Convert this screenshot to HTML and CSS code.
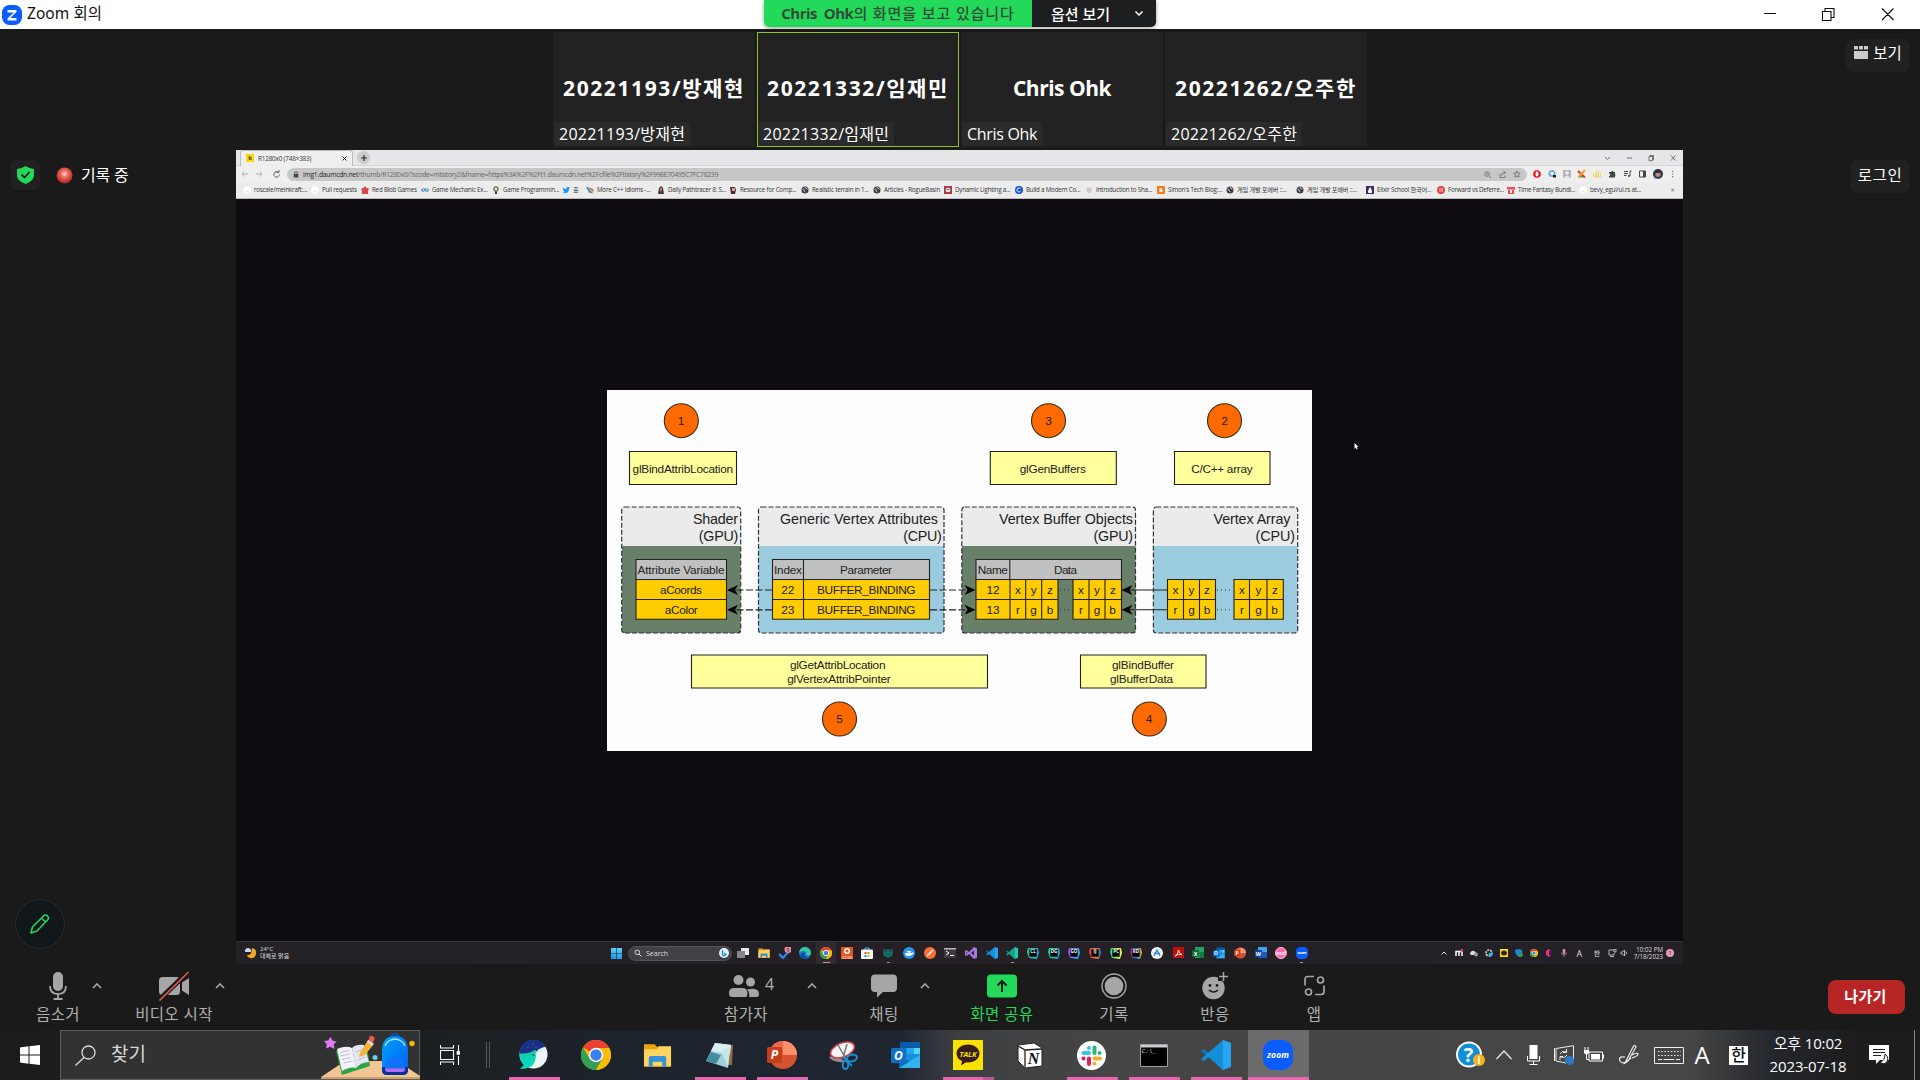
FILE: index.html
```html
<!DOCTYPE html>
<html lang="ko">
<head>
<meta charset="utf-8">
<title>Zoom 회의</title>
<link rel="stylesheet" href="styles.css">
</head>
<body>
<svg class="defs" aria-hidden="true">
  <defs>
    <linearGradient id="sky" x1="0" y1="0" x2="0" y2="1"><stop offset="0" stop-color="#5fd0f7"/><stop offset="1" stop-color="#1b9be6"/></linearGradient>
    <linearGradient id="whaleBody" x1="0" y1="0" x2="0" y2="1"><stop offset="0" stop-color="#17c9a6"/><stop offset="1" stop-color="#00e0c0"/></linearGradient>
    <linearGradient id="bag" x1="0" y1="0" x2="1" y2="1"><stop offset="0" stop-color="#00a2ff"/><stop offset="1" stop-color="#0060f0"/></linearGradient>
    <linearGradient id="jb1"><stop offset="0" stop-color="#21d789"/><stop offset="1" stop-color="#1a9edb"/></linearGradient>
    <linearGradient id="jb2"><stop offset="0" stop-color="#b345f1"/><stop offset="1" stop-color="#07c3f2"/></linearGradient>
    <linearGradient id="jb3"><stop offset="0" stop-color="#fe315d"/><stop offset=".6" stop-color="#f97a12"/><stop offset="1" stop-color="#087cfa"/></linearGradient>
    <linearGradient id="jb4"><stop offset="0" stop-color="#21d789"/><stop offset="1" stop-color="#fcf84a"/></linearGradient>
    <linearGradient id="jb5"><stop offset="0" stop-color="#c90f5e"/><stop offset=".5" stop-color="#077cfb"/><stop offset="1" stop-color="#fdb60d"/></linearGradient>
    <radialGradient id="rec" cx=".5" cy=".4" r=".6"><stop offset="0" stop-color="#ffd9d2"/><stop offset=".35" stop-color="#ea7064"/><stop offset=".8" stop-color="#c8382f"/><stop offset="1" stop-color="#7c2a25"/></radialGradient>
  </defs>
  <symbol id="chrome" viewBox="0 0 30 30"><circle cx="15" cy="15" r="15" fill="#fbbc05"/><path d="M15 15 2 7.500A15 15 0 0 1 28 7.500z" fill="#ea4335"/><path d="M15 15 8.500 18.500 2 7.500A15 15 0 0 0 15 30L21.500 18.500z" fill="#34a053"/><path d="M15 8h13.200A15 15 0 0 1 15 30l6.500-11z" fill="#fbbc05"/><circle cx="15" cy="15" r="7.200" fill="#fff"/><circle cx="15" cy="15" r="5.700" fill="#3a7ff0"/></symbol>
  <symbol id="explorer" viewBox="0 0 30 30"><path d="M1 4h11l3 3h14v20H1z" fill="#e8a317"/><path d="M1 9h13l2-3h13v21H1z" fill="#ffd45c"/><path d="M6 27V18q0-2 2-2h14q2 0 2 2v9h-4v-4q0-1-1-1h-8q-1 0-1 1v4z" fill="#3292dc"/></symbol>
  <symbol id="ppt" viewBox="0 0 30 30"><circle cx="16" cy="15" r="14" fill="#d35230"/><path d="M16 1a14 14 0 0 1 14 14H16z" fill="#ff8f6b"/><path d="M16 1v14H2A14 14 0 0 1 16 1z" fill="#ed6c47"/><rect x="0" y="7" width="15" height="16" rx="1.500" fill="#c43e1c"/></symbol>
  <symbol id="outlook" viewBox="0 0 30 30"><path d="M9 2h20v25H9z" fill="#1490df"/><path d="M9 2h20v6H9z" fill="#0a5ca8"/><path d="M16 8h7v6h-7z" fill="#28a8ea"/><path d="M23 8h6v6h-6z" fill="#50d9ff"/><path d="M8 15l21 13H8z" fill="#0f6cbd"/><path d="M29 15v13H8z" fill="#35b1f0"/><rect y="8" width="15" height="15" rx="1.500" fill="#0f6fc5"/></symbol>
  <symbol id="vscode" viewBox="0 0 30 30"><path d="M22 0 8 13 3 9 0 11l20 17 2 2z" fill="#0a7bc4"/><path d="M22 30 8 17 3 21 0 19 20 2l2-2z" fill="#168fdb"/><path d="M22 0l8 3v24l-8 3z" fill="#2aa5f3"/></symbol>
  <symbol id="vsci" viewBox="0 0 30 30"><path d="M22 0 8 13 3 9 0 11l20 17 2 2z" fill="#128b76"/><path d="M22 30 8 17 3 21 0 19 20 2l2-2z" fill="#17a589"/><path d="M22 0l8 3v24l-8 3z" fill="#24c9a5"/></symbol>
  <symbol id="globe" viewBox="0 0 8 8"><circle cx="4" cy="4" r="3.500" fill="#3c3c40"/><path d="M1.500 3Q3 3 3 4.200T4.500 6M4 1q0 1.500 2.500 2" stroke="#ddd" fill="none"/></symbol>
  <symbol id="github" viewBox="0 0 8 8"><circle cx="4" cy="4" r="3.800" fill="#fff"/><path d="M2.500 6.500Q4 3 5.500 6.500" stroke="#dedede" fill="none"/></symbol>
  <symbol id="chev" viewBox="0 0 10 6"><path d="M1 5l4-4 4 4" fill="none" stroke="#a6a6a6" stroke-width="1.700"/></symbol>
</svg>

<header class="titlebar">
  <svg class="app-mark" viewBox="0 0 20 20"><rect width="20" height="20" rx="7.500" fill="#0b5cff"/><path d="M5.500 5h9v1.800L8.300 13H14.500v2.400h-9v-1.800L11.700 7.400H5.500z" fill="#fff"/></svg>
  <span class="app-name">Zoom 회의</span>
  <div class="banner"><span class="banner-text"><b>Chris&nbsp; Ohk</b>의 화면을 보고 있습니다</span><span class="banner-opt">옵션 보기<svg width="10" height="7" viewBox="0 0 10 7"><path d="M1.500 1.500 5 5l3.500-3.500" fill="none" stroke="#fff" stroke-width="1.500"/></svg></span></div>
  <svg class="win-buttons" width="130" height="14" viewBox="0 0 130 14"><path d="M0 6.500h12M58.500 4.500h8.500v9h-8.500zM61 4.500v-3h9v9h-3M118 1.500l11.500 11.500M129.500 1.500 118 13" fill="none" stroke="#111" stroke-width="1.100"/></svg>
</header>

<main class="stage">
  <aside class="side-left">
    <div class="status">
      <span class="shield"><svg width="17" height="18" viewBox="0 0 17 18"><path d="M8.500 0Q12 2.500 17 3v6q0 6-8.500 9Q0 15 0 9V3Q5 2.500 8.500 0z" fill="#23d959"/><path d="M4.500 8.500l3 3 5-5.500" fill="none" stroke="#1a1a1a" stroke-width="1.800"/></svg></span>
      <svg class="rec-dot" width="17" height="17" viewBox="0 0 17 17"><circle cx="8.500" cy="8.500" r="8" fill="url(#rec)"/></svg>
      <span class="rec-text">기록 중</span>
    </div>
    <span class="pen"><svg width="20" height="20" viewBox="0 0 20 20"><path d="M1 19l1.500-6L13.500 2q2-2 4 0t0 4L7 17zM11.500 4l4 4" fill="none" stroke="#23d959" stroke-width="1.600" stroke-linejoin="round"/></svg></span>
  </aside>

  <section class="center">
    <div class="thumbs">
      <div class="tile"><div class="tile-name">20221193/방재현</div><span class="tile-label">20221193/방재현</span></div>
      <div class="tile active"><div class="tile-name">20221332/임재민</div><span class="tile-label">20221332/임재민</span></div>
      <div class="tile"><div class="tile-name latin">Chris Ohk</div><span class="tile-label latin">Chris Ohk</span></div>
      <div class="tile"><div class="tile-name">20221262/오주한</div><span class="tile-label">20221262/오주한</span></div>
    </div>

    <div class="share">
      <div class="tabstrip">
        <div class="tab"><span class="fav">k</span><span class="tab-title">R1280x0 (748×383)</span><svg width="5" height="5" viewBox="0 0 5 5"><path d="M.5.5l4 4M4.500.5l-4 4" stroke="#222"/></svg></div>
        <span class="newtab"><svg width="6" height="6" viewBox="0 0 6 6"><path d="M3 0v6M0 3h6" stroke="#222" stroke-width="1.100"/></svg></span>
        <svg class="mini-win" width="72" height="8" viewBox="0 0 72 8" fill="none" stroke="#555" stroke-width=".8"><path d="M1 3l2.500 2.500L6 3M23 4h5M45 2.500h3.500v4.200H45zM46 2.500v-1h3.500v4.200h-1M67 1.500l4.500 5M71.500 1.500l-4.500 5"/></svg>
      </div>
      <div class="address-row">
        <svg width="48" height="10" viewBox="0 0 48 10" fill="none" stroke-width=".9"><path d="M8 5H2M4.500 2.500 2 5l2.500 2.500M16 5h6M19.500 2.500 22 5l-2.500 2.500" stroke="#aaa"/><path d="M38.500 3.200A2.800 2.800 0 1 0 39.500 5.500M39 1v2.500h-2.500" stroke="#555"/></svg>
        <div class="omnibox"><svg width="6" height="7" viewBox="0 0 6 7"><path d="M.7 3h4.600v3.500H.7z" fill="#444"/><path d="M1.700 3V2a1.300 1.300 0 0 1 2.600 0v1" fill="none" stroke="#444" stroke-width=".8"/></svg><span class="url"><b>img1.daumcdn.net</b>/thumb/R1280x0/?scode=mtistory2&amp;fname=https%3A%2F%2Ft1.daumcdn.net%2Fcfile%2Ftistory%2F998E70495C7FC78239</span>
          <svg class="omni-icons" width="40" height="9" viewBox="0 0 40 9" fill="none" stroke="#666" stroke-width=".8"><circle cx="4" cy="4" r="2.300"/><path d="M6 6l2 2M3 4h2M17 4v3.500h5V5.500M18.500 5.500q0-3 3-3M20.500 1l2 1.500-2 1.500M34 1l.9 2.100 2.300.2-1.700 1.600.5 2.300-2-1.200-2 1.200.5-2.300-1.700-1.600 2.300-.2z"/></svg></div>
        <svg class="exts" width="146" height="12" viewBox="0 0 146 12"><circle cx="5" cy="6" r="3.800" fill="#e11"/><rect x="3.600" y="3.500" width="2.800" height="5" rx="1.400" fill="#fff"/><circle cx="20" cy="5.500" r="3.500" fill="#6da9d8"/><circle cx="20" cy="5.500" r="1.800" fill="#e8f0f5"/><path d="M21 7h3v2.500h-3z" fill="#222"/><path d="M31 2h8v7.500h-8z" fill="#b5b5b8"/><circle cx="35" cy="5" r="1.800" fill="#eee"/><path d="M32.500 9.500q2.500-4 5 0z" fill="#eee"/><path d="M46 9.500l3-3 3 3z" fill="#25a45a"/><path d="M46 3l7 6.500" stroke="#db3f32" stroke-width="2"/><path d="M53 2l-6.500 7" stroke="#f2a626" stroke-width="2"/><path d="M61.500 6h2v3h-2zM64 3h2v6h-2zM66.500 5h2v4h-2z" fill="none" stroke="#f1cf50" stroke-width=".8"/><path d="M77 4h2.200a1.300 1.300 0 0 1 2.500 0H83v2.200a1.300 1.300 0 0 1 0 2V9.500h-6V8a1.200 1.200 0 0 0 0-2.500z" fill="#444"/><path d="M92 3.500h4M92 5.500h4M92 7.500h2.500M98 8V3h1.500" fill="none" stroke="#444"/><circle cx="97" cy="8" r="1" fill="#444"/><path d="M107.500 3h6v6h-6z" fill="none" stroke="#444"/><path d="M111 3h2.500v6H111z" fill="#444"/><circle cx="126" cy="6" r="5" fill="#333344"/><path d="M123.500 5h5v2.500q-2.500 3-5 0z" fill="#b78b7b"/><path d="M121.500 8l4 3h-3z" fill="#69a0df"/><g fill="#444"><circle cx="140.700" cy="3.300" r=".6"/><circle cx="140.700" cy="6" r=".6"/><circle cx="140.700" cy="8.700" r=".6"/></g></svg>
      </div>
      <nav class="bookmarks">
        <span style="width:68px"><svg><use href="#github"/></svg>roscale/meinkraft:...</span>
        <span style="width:50px"><svg><use href="#github"/></svg>Pull requests</span>
        <span style="width:60px"><svg viewBox="0 0 8 8"><path d="M4 0l1.500 2L8 2.500 7 5l.2 3H.8L1 5 0 2.500 2.500 2z" fill="#d8494f"/></svg>Red Blob Games</span>
        <span style="width:71px"><svg viewBox="0 0 8 8"><path d="M1.500 2.500h5L8 4 6.500 6 4 5 1.500 6 0 4z" fill="#4b83c7"/><circle cx="2.500" cy="4" r=".8" fill="#fff"/><circle cx="5.500" cy="4" r=".8" fill="#fff"/></svg>Game Mechanic Ex...</span>
        <span style="width:70px"><svg viewBox="0 0 8 8"><circle cx="4" cy="3" r="2.200" fill="#eee8c6" stroke="#333"/><path d="M3 5.500h2V8H3z" fill="#333"/></svg>Game Programmin...</span>
        <span style="width:24px"><svg viewBox="0 0 8 8"><path d="M0 6.500q2 .2 2.500-.5Q.5 5 .8 1.500 2.500 3.200 4 3q0-2 2-2L8 1.500 7 3q0 4-4 4.300-2 0-3-.8z" fill="#1d9bf0"/></svg>홈</span>
        <span style="width:71px"><svg viewBox="0 0 8 8"><path d="M0 1h3l2 6H3z" fill="#68a5d5"/><path d="M3 1l5 2-1 5-2-1z" fill="#c8b98b"/><path d="M1 2l5 5M4 2l3 3" stroke="#444" stroke-width=".7"/></svg>More C++ Idioms -...</span>
        <span style="width:72px"><svg viewBox="0 0 8 8"><path d="M1 8L2 2l2-2 2 2 1 6z" fill="#453b3b"/><path d="M3 2h2v2L3 6z" fill="#b98378"/></svg>Daily Pathtracer 8: S...</span>
        <span style="width:72px"><svg viewBox="0 0 8 8"><path d="M1 1h5l1 3-1 4H2z" fill="#4a2c2a"/><path d="M3 2h3v3H3z" fill="#d6a28a"/></svg>Resource for Comp...</span>
        <span style="width:72px"><svg><use href="#globe"/></svg>Realistic terrain in 1...</span>
        <span style="width:71px"><svg><use href="#globe"/></svg>Articles - RogueBasin</span>
        <span style="width:71px"><svg viewBox="0 0 8 8"><path d="M0 0h8v8H0z" fill="#a63a40"/><ellipse cx="4" cy="4" rx="2.500" ry="2.200" fill="#eee"/><path d="M2.700 3.500h1M4.500 3.500h1" stroke="#222"/></svg>Dynamic Lighting a...</span>
        <span style="width:70px"><svg viewBox="0 0 8 8"><circle cx="4" cy="4" r="4" fill="#1353cf"/><path d="M5.500 2.700a2 2 0 1 0 0 2.600" fill="none" stroke="#fff"/></svg>Build a Modern Co...</span>
        <span style="width:72px"><svg viewBox="0 0 8 8"><circle cx="4" cy="4" r="3.500" fill="#ccc" stroke="#f5f5f5"/></svg>Introduction to Sha...</span>
        <span style="width:69px"><svg viewBox="0 0 8 8"><rect width="8" height="8" rx="1" fill="#f57d20"/><path d="M2.500 2h2v1.500h1V6h-3z" fill="#fff"/></svg>Simon's Tech Blog:...</span>
        <span style="width:70px"><svg><use href="#globe"/></svg>게임 개발 포에버 ::...</span>
        <span style="width:70px"><svg><use href="#globe"/></svg>게임 개발 포에버 ::...</span>
        <span style="width:71px"><svg viewBox="0 0 8 8"><path d="M0 0h8v8H0z" fill="#3f2c5c"/><path d="M4 1q3 4 1.500 6h-3Q1 5 4 1z" fill="#fff"/></svg>Elixir School 한국어...</span>
        <span style="width:70px"><svg viewBox="0 0 8 8"><circle cx="4" cy="4" r="4" fill="#e04848"/><path d="M2 3h4M2 5h4" stroke="#fbb"/></svg>Forward vs Deferre...</span>
        <span style="width:72px"><svg viewBox="0 0 8 8"><path d="M0 1h8v2.500H0zM1 4h6v4H1z" fill="#f04b50"/><path d="M3 4h2v3H3z" fill="#fff"/></svg>Time Fantasy Bundl...</span>
        <span style="width:92px"><svg><use href="#github"/></svg>bevy_egui/ui.rs at...</span>
        <span class="more">»</span>
      </nav>

      <div class="canvas">
        <svg class="diagram" width="705" height="361" viewBox="607 390 705 361">
          <path d="M607 390h706v361H607z" fill="#fdfdfd"/>
          <g fill="#ff6a00" stroke="#3c2a20" stroke-width="1.100"><circle cx="681.300" cy="420.700" r="17"/><circle cx="1048.500" cy="420.700" r="17"/><circle cx="1224.500" cy="420.700" r="17"/><circle cx="839.500" cy="719" r="17"/><circle cx="1149.300" cy="719" r="17"/></g>
          <g fill="#ffff9c" stroke="#222" stroke-width="1.100"><path d="M629.500 451.500h107v33h-107zM990.300 451.500h126v33h-126zM1174.500 451.500h95.500v33h-95.500zM691.500 655h296v33h-296zM1080.500 655h125.500v33h-125.500z"/></g>
          <g fill="#ebebeb"><path d="M622 507h118.500v39H622zM758.500 507H944v39H758.500zM962 507h173.500v39H962zM1153.500 507h144v39h-144z"/></g>
          <path d="M622 546h118.500v87H622zM962 546h173.500v87H962z" fill="#688069"/>
          <path d="M758.500 546H944v87H758.500zM1153.500 546h144v87h-144z" fill="#9bcbdf"/>
          <g fill="none" stroke="#333" stroke-width="1.200" stroke-dasharray="5 2"><rect x="621.700" y="507" width="119" height="126" rx="3"/><rect x="758.500" y="507" width="185.500" height="126" rx="3"/><rect x="961.800" y="507" width="173.700" height="126" rx="3"/><rect x="1153.400" y="507" width="144.300" height="126" rx="3"/></g>
          <g fill="#c0c0c0" stroke="#222" stroke-width="1.100"><path d="M636 559.500h90.500v20H636zM772.500 559.500h31v20h-31zM803.500 559.500h126v20h-126zM976 559.500h33.800v20H976zM1009.800 559.500h111.700v20h-111.700z"/></g>
          <g fill="#ffcc00" stroke="#222" stroke-width="1.100"><path d="M636 579.500h90.500v20H636zm0 20h90.500v19.800H636zM772.500 579.500h157v39.800h-157zm0 20h157M803.500 579.500v39.800M976 579.500h82v39.800h-82zm0 20h82M1010 579.500v39.800M1025.700 579.500v39.800M1041.700 579.500v39.800M1073 579.500h48.500v39.800H1073zm0 20h48.500M1089 579.500v39.800M1105 579.500v39.800M1167.500 579.500h48v39.800h-48zm0 20h48M1183.500 579.500v39.800M1199.500 579.500v39.800M1234 579.500h49.300v39.800H1234zm0 20h49.300M1249.500 579.500v39.800M1267 579.500v39.800"/></g>
          <path d="M1060 590h12M1060 609.800h12M1217 590h16M1217 609.800h16" stroke="#333" stroke-dasharray="1 3"/>
          <path d="M772 590h-37M772 609.800h-37M930 590h38M930 609.800h38" stroke="#222" stroke-width="1.200" stroke-dasharray="7 2.500"/>
          <path d="M1167 590h-37M1167 609.800h-37" stroke="#222" stroke-width="1.100"/>
          <path d="M727 590l11-5-3 5 3 5zM727 609.800l11-5-3 5 3 5zM975.500 590l-11-5 3 5-3 5zM975.500 609.800l-11-5 3 5-3 5zM1121.500 590l11-5-3 5 3 5zM1121.500 609.800l11-5-3 5 3 5z" fill="#000"/>
          <g class="dt">
            <text x="681" y="425">1</text><text x="1048.500" y="425">3</text><text x="1224.500" y="425">2</text><text x="839.500" y="723">5</text><text x="1149" y="723">4</text>
            <text x="682.800" y="472.500" textLength="100.500">glBindAttribLocation</text><text x="1052.800" y="472.500" textLength="66">glGenBuffers</text><text x="1221.900" y="472.500" textLength="61.500">C/C++ array</text>
            <text x="837.700" y="669" textLength="95.500">glGetAttribLocation</text><text x="839" y="683" textLength="103.500">glVertexAttribPointer</text><text x="1143" y="669" textLength="62">glBindBuffer</text><text x="1141.500" y="683" textLength="63">glBufferData</text>
            <text x="681" y="574.300" textLength="87">Attribute Variable</text><text x="681" y="594.300" textLength="42">aCoords</text><text x="681.300" y="614" textLength="33">aColor</text>
            <text x="788" y="574.300" textLength="28">Index</text><text x="866" y="574.300" textLength="52">Parameter</text><text x="787.700" y="594.300">22</text><text x="787.700" y="614">23</text><text x="866.300" y="594.300" textLength="98.500">BUFFER_BINDING</text><text x="866.300" y="614" textLength="98.500">BUFFER_BINDING</text>
            <text x="992.800" y="574.300" textLength="30">Name</text><text x="1065.500" y="574.300" textLength="23">Data</text><text x="993" y="594.300">12</text><text x="993" y="614">13</text>
            <text x="1018" y="594.300">x</text><text x="1033.700" y="594.300">y</text><text x="1050" y="594.300">z</text><text x="1081" y="594.300">x</text><text x="1097" y="594.300">y</text><text x="1113" y="594.300">z</text>
            <text x="1018" y="614">r</text><text x="1033.500" y="614">g</text><text x="1050" y="614">b</text><text x="1081" y="614">r</text><text x="1097" y="614">g</text><text x="1112.500" y="614">b</text>
            <text x="1175.500" y="594.300">x</text><text x="1191.500" y="594.300">y</text><text x="1207" y="594.300">z</text><text x="1242" y="594.300">x</text><text x="1258.500" y="594.300">y</text><text x="1275" y="594.300">z</text>
            <text x="1175.500" y="614">r</text><text x="1191.500" y="614">g</text><text x="1207" y="614">b</text><text x="1242" y="614">r</text><text x="1258.500" y="614">g</text><text x="1274.500" y="614">b</text>
          </g>
          <g class="dh">
            <text x="738" y="523.500" textLength="45">Shader</text><text x="738.300" y="540.500" textLength="39.500">(GPU)</text>
            <text x="938" y="523.500" textLength="158">Generic Vertex Attributes</text><text x="941.700" y="540.500" textLength="38.500">(CPU)</text>
            <text x="1133" y="523.500" textLength="134">Vertex Buffer Objects</text><text x="1133" y="540.500" textLength="39.500">(GPU)</text>
            <text x="1290.500" y="523.500" textLength="77">Vertex Array</text><text x="1295" y="540.500" textLength="39.500">(CPU)</text>
          </g>
        </svg>
        <svg class="cursor" width="5" height="7" viewBox="0 0 5 7"><path d="M.5 0l4 4H2.700l1 2-1 .6-.9-2L.5 6z" fill="#fff"/></svg>
      </div>

      <div class="mini-bar">
        <div class="weather"><svg width="12" height="12" viewBox="0 0 12 12"><path d="M7 1q5 1 4 6t-6 4q-3-1-3-3 5 1 5-7z" fill="#f5a623"/><path d="M0 3q1-2 3-2t3 2q1 2-1 2H1Q-.5 5 0 3z" fill="#cfd9f5"/></svg><span>24°C<br>대체로 맑음</span></div>
        <svg class="mini-start" width="11" height="11" viewBox="0 0 11 11"><path d="M0 0h5.200v5.200H0zM5.800 0H11v5.200H5.800zM0 5.800h5.200V11H0zM5.800 5.800H11V11H5.800z" fill="url(#sky)"/></svg>
        <div class="mini-search"><svg width="8" height="8" viewBox="0 0 8 8"><circle cx="3.300" cy="3.300" r="2.300" fill="none" stroke="#ddd"/><path d="M5 5l2.500 2.500" stroke="#ddd"/></svg><span>Search</span><svg width="10" height="10" viewBox="0 0 10 10"><circle cx="5" cy="5" r="5" fill="#e9f6ff"/><path d="M3.500 2v5l1.500 1 2-1.500L5 5" fill="none" stroke="#1583d8" stroke-width="1.300"/></svg></div>
        <div class="mini-apps">
          <i><svg viewBox="0 0 12 12"><path d="M4 1h8v7H4z" fill="#e8e8e8"/><path d="M0 4h8v7H0z" fill="#85858a"/></svg></i>
          <i><svg><use href="#explorer"/></svg></i>
          <i><svg viewBox="0 0 12 12"><path d="M0 7l4 4 6-7" fill="none" stroke="#2f7fe0" stroke-width="2.500"/><circle cx="9" cy="2.500" r="3.500" fill="#e98aa5"/><text x="9" y="4.500" class="ic" font-size="5" fill="#222">9</text></svg></i>
          <i><svg viewBox="0 0 12 12"><circle cx="6" cy="6" r="6" fill="#1479cf"/><path d="M0 6a6 6 0 0 1 12 0q0 2.500-3 2.500-2 0-2-1.500 1-3-3-3-3 0-4 2z" fill="#38c6a0"/><path d="M1 9q2-5 5-3-2 3 3 5-5 2-8-2z" fill="#0b4fa0"/></svg></i>
          <i class="on"><svg><use href="#chrome"/></svg></i>
          <i><svg viewBox="0 0 12 12"><path d="M0 0h12v12H0z" fill="#e95420"/><circle cx="6" cy="4" r="2.300" fill="none" stroke="#fff" stroke-width="1.500"/><text x="6" y="11.500" class="ic" font-size="4" fill="#fff">22.04</text></svg></i>
          <i><svg viewBox="0 0 12 12"><path d="M4 3V1h4v2" fill="none" stroke="#4cc2f1"/><rect y="2.500" width="12" height="9.500" rx="1" fill="#f5f5f5"/><path d="M3.500 5h2v2h-2z" fill="#f25022"/><path d="M6.500 5h2v2h-2z" fill="#7fba00"/><path d="M3.500 8h2v2h-2z" fill="#00a4ef"/><path d="M6.500 8h2v2h-2z" fill="#ffb900"/></svg></i>
          <i class="dot"><svg viewBox="0 0 12 12"><circle cx="6" cy="6" r="4" fill="#14554f"/><path d="M2.500 2Q0 6 4 10M9.500 2q2.500 4-1.500 8M6 3v8M4 5v2.500M8 5v2.500" fill="none" stroke="#179287" stroke-width=".9"/></svg></i>
          <i><svg viewBox="0 0 12 12"><circle cx="6" cy="6" r="6" fill="#2396ed"/><path d="M2 6h7l1-1 .7 1Q9 9 5 9 2 9 2 6zM4 4h4v1.500H4z" fill="#fff"/></svg></i>
          <i><svg viewBox="0 0 12 12"><circle cx="6" cy="6" r="6" fill="#ff6c37"/><path d="M3 9l6-6" stroke="#fff" stroke-width="1.500"/></svg></i>
          <i><svg viewBox="0 0 12 12"><path d="M0 1h12v10H0z" fill="#3b3b3f"/><path d="M0 1h12v1.500H0z" fill="#b9b9b9"/><path d="M2 4l3 2-3 2M6 8.500h4" fill="none" stroke="#fff"/></svg></i>
          <i><svg viewBox="0 0 12 12"><path d="M9 0l3 1.500v9L9 12 4 7 1.500 9 0 8V4l1.500-1L4 5zM9 3.500 6 6l3 2.500zM1.500 5v2L2.700 6z" fill="#a679e0" fill-rule="evenodd"/></svg></i>
          <i><svg><use href="#vscode"/></svg></i>
          <i class="dot"><svg><use href="#vsci"/></svg></i>
          <i><svg viewBox="0 0 12 12"><path d="M1 1l10 0 1 5-2 6-8-1-2-6z" fill="url(#jb1)"/><path d="M2.300 2.300h7.400v7.400H2.300z"/><text x="6" y="6" class="ic b" font-size="4.500" fill="#fff">CL</text></svg></i>
          <i><svg viewBox="0 0 12 12"><path d="M1 1l10 0 1 5-2 6-8-1-2-6z" fill="url(#jb1)"/><path d="M2.300 2.300h7.400v7.400H2.300z"/><text x="6" y="6" class="ic b" font-size="4.500" fill="#fff">DG</text></svg></i>
          <i><svg viewBox="0 0 12 12"><path d="M1 1l10 0 1 5-2 6-8-1-2-6z" fill="url(#jb2)"/><path d="M2.300 2.300h7.400v7.400H2.300z"/><text x="6" y="6" class="ic b" font-size="4.500" fill="#fff">GO</text></svg></i>
          <i><svg viewBox="0 0 12 12"><path d="M1 1l10 0 1 5-2 6-8-1-2-6z" fill="url(#jb3)"/><path d="M2.300 2.300h7.400v7.400H2.300z"/><text x="6" y="6" class="ic b" font-size="4.500" fill="#fff">IJ</text></svg></i>
          <i><svg viewBox="0 0 12 12"><path d="M1 1l10 0 1 5-2 6-8-1-2-6z" fill="url(#jb4)"/><path d="M2.300 2.300h7.400v7.400H2.300z"/><text x="6" y="6" class="ic b" font-size="4.500" fill="#fff">PC</text></svg></i>
          <i><svg viewBox="0 0 12 12"><path d="M1 1l10 0 1 5-2 6-8-1-2-6z" fill="url(#jb5)"/><path d="M2.300 2.300h7.400v7.400H2.300z"/><text x="6" y="6" class="ic b" font-size="4.500" fill="#fff">RD</text></svg></i>
          <i><svg viewBox="0 0 12 12"><circle cx="6" cy="6" r="6" fill="#f4f8fc"/><path d="M3 9l3-6 3 6M3 6.500h6" fill="none" stroke="#2c86dd" stroke-width="1.300"/></svg></i>
          <i><svg viewBox="0 0 12 12"><rect y="0" x="1" width="11" height="11" rx="1" fill="#c20d09"/><path d="M3 9q4-3 3.500-6Q7 7 10 7.500 6 6.500 3 9" fill="none" stroke="#fff" stroke-width=".9"/></svg></i>
          <i><svg viewBox="0 0 12 12"><path d="M3 0h9v11H3z" fill="#21a366"/><path d="M7.500 5H12v6H7.500z" fill="#107c41"/><path d="M0 3h7v7H0z" fill="#0d6b38"/><text x="3.500" y="8.500" class="ic b" font-size="5.500" fill="#fff">X</text></svg></i>
          <i><svg viewBox="0 0 30 30"><use href="#outlook"/><text x="7.500" y="20" class="ic b" font-size="12" fill="#fff">O</text></svg></i>
          <i><svg viewBox="0 0 30 30"><use href="#ppt"/><text x="7.500" y="19" class="ic b" font-size="12" fill="#fff">P</text></svg></i>
          <i><svg viewBox="0 0 12 12"><path d="M3 0h9v11H3z" fill="#41a5ee"/><path d="M3 5h9v6H3z" fill="#185abd"/><path d="M0 3h7v7H0z" fill="#134a9e"/><text x="3.500" y="8.500" class="ic b" font-size="5.500" fill="#fff">W</text></svg></i>
          <i><svg viewBox="0 0 12 12"><circle cx="6" cy="6" r="5.500" fill="#ff66aa" stroke="#f6c1d8"/><text x="6" y="7.700" class="ic b" font-size="4.500" fill="#fff">osu!</text></svg></i>
          <i class="dot"><svg viewBox="0 0 30 30"><rect width="30" height="30" rx="11" fill="#0b5cff"/><text x="15" y="18" class="ic b" font-size="9.500" textLength="23" fill="#fff">zoom</text></svg></i>
        </div>
        <div class="mini-tray">
          <i><svg viewBox="0 0 8 8"><path d="M1.500 5.500 4 3l2.500 2.500" fill="none" stroke="#ddd"/></svg></i>
          <i><svg viewBox="0 0 8 8"><path d="M1 7V2.500h6V7M4 3v4" fill="none" stroke="#fff" stroke-width="1.500"/><circle cx="7" cy="1.500" r="1.500" fill="#e44"/></svg></i>
          <i><svg viewBox="0 0 8 8"><path d="M0 5q1-4 4-3 2 1 2 2v2H1z" fill="#ddd"/><circle cx="6" cy="5.500" r="2" fill="#999"/></svg></i>
          <i><svg viewBox="0 0 8 8"><circle cx="4" cy="4" r="3" fill="none" stroke="#ddd" stroke-width="1.600" stroke-dasharray="2 1"/><circle cx="5.500" cy="5.500" r="2" fill="#27b9d8"/></svg></i>
          <i><svg viewBox="0 0 8 8"><path d="M0 0h8v8H0z" fill="#fae100"/><ellipse cx="4" cy="4" rx="3" ry="2.500" fill="#371d1e"/></svg></i>
          <i><svg viewBox="0 0 8 8"><path d="M0 1l4-1 3 1v3q0 3-3 4-4-2-4-7z" fill="#1b86da"/><circle cx="5.800" cy="5.800" r="2.200" fill="#2a9f4d"/></svg></i>
          <i><svg><use href="#chrome"/></svg></i>
          <i><svg viewBox="0 0 8 8"><path d="M4 0L1 2v4l3 2 2-2V2z" fill="#f0336c"/><path d="M4 2l3-1v6L4 6z" fill="#3c1b56"/></svg></i>
          <i><svg viewBox="0 0 8 8"><rect x="2.700" y="0" width="2.600" height="5" rx="1.300" fill="#c99"/><path d="M1.500 3.500q0 2.500 2.500 2.500t2.500-2.500M4 6v2" fill="none" stroke="#a88" stroke-width=".8"/></svg></i>
          <i class="glyph">A</i>
          <i class="glyph ko">한</i>
          <i class="net"><svg viewBox="0 0 20 8"><path d="M6 1H1v5h5V4M2 7.500h4M6 0h2v3H6zM13 3h1.500L16.500 1v6l-2-2H13zM18 2.500q1 1.500 0 3" fill="none" stroke="#ddd" stroke-width=".8"/></svg></i>
        </div>
        <div class="mini-clock">10:02 PM<br>7/18/2023</div>
        <span class="mini-badge">1</span>
      </div>
    </div>
  </section>

  <aside class="side-right">
    <button class="view"><svg width="14" height="13" viewBox="0 0 14 13"><path d="M0 0h4v3.500H0zM5 0h4v3.500H5zM10 0h4v3.500h-4zM0 5h14v8H0z" fill="#ccc"/></svg>보기</button>
    <button class="login">로그인</button>
  </aside>
</main>

<section class="controls">
  <div class="ctl c-mic"><svg width="18" height="28" viewBox="0 0 18 28"><rect x="4" y="0" width="10" height="19" rx="5" fill="#a6a6a6"/><path d="M1 14q0 8 8 8t8-8M9 22v5M4.500 27h9" fill="none" stroke="#a6a6a6" stroke-width="1.800"/></svg><span>음소거</span></div>
  <svg class="caret k1"><use href="#chev"/></svg>
  <div class="ctl c-video"><svg width="32" height="30" viewBox="0 0 32 30"><rect x="1" y="6" width="21" height="18" rx="3.500" fill="#a6a6a6"/><path d="M24 11.500 31 7v17l-7-4.500z" fill="#a6a6a6"/><path d="M1 29 30 1" stroke="#1a1a1a" stroke-width="5"/><path d="M1.500 29.500 30.500 1" stroke="#f0574d" stroke-width="1.600"/></svg><span>비디오 시작</span></div>
  <svg class="caret k2"><use href="#chev"/></svg>
  <div class="ctl c-people"><div class="icon-row"><svg width="30" height="22" viewBox="0 0 30 22" fill="#a6a6a6"><circle cx="9.500" cy="5" r="5"/><path d="M0 18q0-5 5-5h8q5.500 0 5.500 5t-3 4H3q-3 0-3-4z"/><circle cx="21.500" cy="7" r="4.500"/><path d="M18 14.500q9-2 11.500 2 1.500 5.500-2 5.500H20q1-5-2-7.500z"/></svg><em>4</em></div><span>참가자</span></div>
  <svg class="caret k3"><use href="#chev"/></svg>
  <div class="ctl c-chat"><svg width="26" height="23" viewBox="0 0 26 23"><path d="M4 0h18q4 0 4 4v9.500q0 4-4 4H12L6 23v-5.500H4q-4 0-4-4V4q0-4 4-4z" fill="#a6a6a6"/></svg><span>채팅</span></div>
  <svg class="caret k4"><use href="#chev"/></svg>
  <div class="ctl c-share"><svg width="30" height="23" viewBox="0 0 30 23"><rect width="30" height="23" rx="4" fill="#23d959"/><path d="M15 17.500V6.500M10.500 11 15 6.500l4.500 4.500" fill="none" stroke="#1a1a1a" stroke-width="2"/></svg><span>화면 공유</span></div>
  <div class="ctl c-rec"><svg width="26" height="26" viewBox="0 0 26 26"><circle cx="13" cy="13" r="12" fill="none" stroke="#a6a6a6" stroke-width="1.400"/><circle cx="13" cy="13" r="9.300" fill="#a6a6a6"/></svg><span>기록</span></div>
  <div class="ctl c-react"><svg width="28" height="28" viewBox="0 0 28 28"><circle cx="12.500" cy="16" r="11.200" fill="#a6a6a6"/><path d="M17 0h11v9H17z" fill="#1a1a1a"/><path d="M22.500 0v9M18 4.500h9" stroke="#a6a6a6" stroke-width="1.500"/><circle cx="9" cy="13.500" r="1.400" fill="#1a1a1a"/><circle cx="16" cy="13.500" r="1.400" fill="#1a1a1a"/><path d="M8 18q4.500 4 9 0" fill="none" stroke="#1a1a1a" stroke-width="1.500"/></svg><span>반응</span></div>
  <div class="ctl c-apps"><svg width="21" height="21" viewBox="0 0 21 21" fill="none" stroke="#a6a6a6" stroke-width="1.700"><path d="M1 10V4q0-3 3-3h6M20 10v6q0 3-3 3h-6"/><circle cx="16.500" cy="4.500" r="3"/><circle cx="4.500" cy="16.500" r="3"/></svg><span>앱</span></div>
  <button class="leave">나가기</button>
</section>

<footer class="taskbar">
  <div class="start"><svg width="20" height="20" viewBox="0 0 20 20"><path d="M0 2.500 8.500 1.300v8.200H0zM9.500 1.200 20 0v9.500H9.500zM0 10.500h8.500v8.200L0 17.500zM9.500 10.500H20V20L9.500 18.800z" fill="#fff"/></svg></div>
  <div class="search">
    <svg width="21" height="21" viewBox="0 0 21 21"><circle cx="13.500" cy="7.500" r="6.500" fill="none" stroke="#ddd" stroke-width="1.300"/><path d="M9 12.500.5 20.500" stroke="#ddd" stroke-width="1.300"/></svg>
    <span>찾기</span>
    <svg class="art" width="99" height="48" viewBox="0 0 99 48"><path d="M0 46 21 32q3-2 7-2h46q4 0 7 3l18 12v3H0z" fill="#f0c694"/><path d="M0 46h99v2H0z" fill="#cba06f"/><path d="M9.500 6l2 3.600 4 .9-2.700 3 .7 4.500-4.300-2.200-4.200 1.700.8-4.200-2.800-3.300 4.200-.5z" fill="#e07af5"/><path d="M15 20l31-5 3 20-28 9z" fill="#2da348"/><path d="M16 18q9-4 15-1l4 20q-6-2-14 3z" fill="#f3f1fb"/><path d="M31 17q4-4 12-3l5 17q-8 0-13 6z" fill="#e7e4f5"/><path d="M19 21.500l9-2M20 25l9-2M21 28.500l9-2M22.500 32l9-2M35 21l5-2M37 29l7-3" stroke="#b3b3bd" stroke-width=".8" fill="none"/><path d="M38.500 22.500 47 9l6 4-9 11-5.500 2z" fill="#f7b23a"/><path d="M47.500 9.500l1-4q2-2 5 1 .5 3-2 5.500z" fill="#ee5a4a"/><path d="M46 11l1.500-2 5 3.500L51 15z" fill="#d9d9df"/><circle cx="54" cy="26.500" r="2.500" fill="#61d5e8"/><circle cx="91" cy="12.500" r="2.700" fill="#ffb400"/><path d="M70 7q0-4 4-4t4 4" fill="none" stroke="#0a4fb0" stroke-width="1.800"/><path d="M61 20Q61 5 74 5t13 15v18q0 6-5 6H66q-5 0-5-6z" fill="url(#bag)"/><path d="M61 36h26v3q0 5-5 5H66q-5 0-5-5z" fill="#0a2e9a"/><path d="M64 35q0-9 10-9t10 9v3q0 3-3 3H67q-3 0-3-3z" fill="#1173f6"/><path d="M64 37.500h20q0 3.500-3 3.500H67q-3 0-3-3.500z" fill="#b56cf4"/><path d="M64 15q2-6 10-7 8 1 10 7" fill="none" stroke="#9fe0ff" stroke-width="1.300"/></svg>
  </div>
  <svg class="taskview" width="20" height="20" viewBox="0 0 20 20" fill="none" stroke="#fff" stroke-width="1.100"><path d="M.5 0v3h13V0M.5 5.500h13v9H.5zM.5 20v-3h13v3M18.500 0v6M18.500 11v9"/><path d="M17.200 6.500h2.600v2.600h-2.600z" fill="#fff"/></svg>
  <span class="grip"></span>
  <div class="apps">
    <i class="run"><svg width="29" height="30" viewBox="0 0 29 30"><circle cx="14.500" cy="14.500" r="14" fill="#f0f5f5"/><path d="M.5 14.500A14 14 0 0 1 27 7Q19 8 16 14z" fill="#1b2f86"/><path d="M.6 13.500Q8 14 12 12q3-2 5-2 1 3 0 6-1 9-6 11-4 2-10 2l4-4Q.5 21 .6 13.500z" fill="url(#whaleBody)"/><path d="M16 14Q19 8 27 7q-2 4-9 8z" fill="#dfeaea"/><circle cx="14.300" cy="15" r=".8" fill="#123"/><g fill="#7f95e0"><circle cx="9" cy="7" r=".5"/><circle cx="14" cy="4" r=".5"/><circle cx="17" cy="7" r=".5"/></g></svg></i>
    <i><svg width="30" height="30"><use href="#chrome"/></svg></i>
    <i><svg width="29" height="30"><use href="#explorer"/></svg></i>
    <i class="run"><svg width="28" height="28" viewBox="0 0 28 28"><path d="M10 2 27 4l-1 20H21z" fill="#8d6a37"/><path d="M9 2l16 2-3 23L0 20z" fill="#9fcfda"/><path d="M9 2l16 2-1 9-19-3z" fill="#d9eef0"/><path d="M5 11l10 3-5 9-10-3z" fill="#3f8f9f"/><path d="M15 10l9-4-2 20z" fill="#c8e4e8"/></svg></i>
    <i class="run"><svg width="30" height="30" viewBox="0 0 30 30"><use href="#ppt"/><text x="7.500" y="19" class="ic b" font-size="12" fill="#fff">P</text></svg></i>
    <i><svg width="29" height="29" viewBox="0 0 29 29"><path d="M0 16q3-2 12 1l4 4Q3 22 0 16z" fill="#8e8e93"/><ellipse cx="13.500" cy="9" rx="12.500" ry="7" fill="#f4f4f6" stroke="#d33b3b" stroke-width="1.500" transform="rotate(-22 13.500 9)"/><path d="M9 4l8 14M18 3l-4 14" stroke="#777" stroke-width="1.500"/><g fill="none" stroke="#1d8fd6" stroke-width="2"><ellipse cx="23" cy="17" rx="5" ry="3.300" transform="rotate(-15 23 17)"/><ellipse cx="16.500" cy="24" rx="2.800" ry="4"/><path d="M14 16l9 9"/></g></svg></i>
    <i><svg width="30" height="30" viewBox="0 0 30 30"><use href="#outlook"/><text x="7.500" y="20" class="ic b" font-size="12" fill="#fff">O</text></svg></i>
    <i class="run stacked"><svg width="30" height="30" viewBox="0 0 30 30"><path d="M0 0h30v30H0z" fill="#fae100"/><path d="M15 4.500c6.500 0 11.500 4 11.500 9s-5 9-11.500 9q-1 0-2-.2L8 25.500l1-4.500c-3.500-1.500-5.500-4.300-5.500-7.500 0-5 5-9 11.500-9z" fill="#371d1e"/><text x="15" y="16.800" class="ic b" font-size="7.500" textLength="17" fill="#fae100">TALK</text></svg></i>
    <i><svg width="26" height="27" viewBox="0 0 26 27"><path d="M1 3 17 1l8 5v18l-17 2-7-7z" fill="#fff" stroke="#222"/><path d="M1 4l7 4v17M8 8l17-1" stroke="#222" stroke-width="1.300" fill="none"/><text x="16.500" y="22" class="ic serif b" font-size="16" fill="#111">N</text></svg></i>
    <i class="run"><svg width="29" height="29" viewBox="0 0 29 29"><circle cx="14.500" cy="14.500" r="14.500" fill="#fff"/><g stroke-width="4" stroke-linecap="round"><path d="M12 7v.1M6.500 12H12" stroke="#36c5f0"/><path d="M17.500 6.500V12M22.500 12h.1" stroke="#2eb67d"/><path d="M17.500 17.500H23M17.500 22.500v.1" stroke="#ecb22e"/><path d="M12 17.500V23M6.500 17.500h.1" stroke="#e01e5a"/></g></svg></i>
    <i class="run"><svg width="28" height="23" viewBox="0 0 28 23"><path d="M.5.5h27v22H.5z" fill="#000" stroke="#9da2a8"/><path d="M1 1h26v2.500H1z" fill="#c8ccd0"/><text x="9" y="8.500" class="ic mono" font-size="6" fill="#ddd">C:\_</text></svg></i>
    <i class="run"><svg width="30" height="30"><use href="#vscode"/></svg></i>
    <i class="run current"><svg width="30" height="30" viewBox="0 0 30 30"><rect width="30" height="30" rx="11" fill="#0b5cff"/><text x="15" y="17.500" class="ic b" font-size="8.500" textLength="22" fill="#fff">zoom</text></svg></i>
  </div>
  <div class="tray">
    <svg class="t-help" width="30" height="28" viewBox="0 0 30 28"><circle cx="14" cy="13.500" r="13" fill="#fff"/><circle cx="14" cy="13.500" r="11" fill="#0f8fd8"/><text x="13.500" y="21" class="ic b" font-size="20" fill="#fff">?</text><circle cx="24" cy="19" r="6" fill="#f5b21e"/><text x="24" y="23" class="ic b" font-size="10" fill="#fff">i</text></svg>
    <svg class="t-up" width="16" height="10" viewBox="0 0 16 10"><path d="M.5 9 8 1l7.500 8" fill="none" stroke="#eee" stroke-width="1.200"/></svg>
    <svg class="t-mic" width="13" height="20" viewBox="0 0 13 20"><path d="M2.500 0h8v14h-8z" fill="#fff"/><path d="M.5 11v5h12v-5M6.500 16v3.500M2.500 19.500h8" fill="none" stroke="#fff"/></svg>
    <svg class="t-sync" width="20" height="20" viewBox="0 0 20 20" fill="none" stroke="#eee"><path d="M2 3.500 19.500.7v14M2 3.500V16l10 2M.5 3v13"/><path d="M6 9q2-4 6-2M12.500 4v3.500H9M13 10q-2 4-6 2M6 15v-3.500h3"/><circle cx="15.500" cy="15.500" r="4.500" fill="#2f77c8" stroke="none"/></svg>
    <svg class="t-bat" width="20" height="16" viewBox="0 0 20 16"><path d="M5 5h13.500v9H5z" fill="none" stroke="#fff"/><path d="M7 7h9v5.500H7zM18.500 7.500H20v4h-1.500zM0 3h5v3q-2.500 3-5 0z" fill="#fff"/><path d="M1 0v3M4 0v3M2.500 6v6.500H5" stroke="#fff" fill="none"/></svg>
    <svg class="t-pen" width="20" height="20" viewBox="0 0 20 20" fill="none" stroke="#eee" stroke-width="1.200"><path d="M6 18 14 2q2-3 3 0L9 16zM6 12q-7-1-5 4 2 3 6 1l5-4M13 10q6-3 6-1t-6 4"/></svg>
    <svg class="t-kbd" width="30" height="17" viewBox="0 0 30 17"><path d="M.5.5h29v16H.5z" fill="none" stroke="#eee"/><path d="M4 4.500h23M4 8.500h23" stroke="#eee" stroke-width="1.200" stroke-dasharray="1.500 1.700"/><path d="M4 12.500h4M9.500 12.500h11M22 12.500h4" stroke="#eee"/></svg>
    <span class="t-a">A</span>
    <span class="t-ko">한</span>
    <div class="clock">오후 10:02<br>2023-07-18</div>
    <svg class="t-note" width="21" height="20" viewBox="0 0 21 20"><path d="M0 0h20v15H11l-4 4v-4H0z" fill="#fff"/><path d="M4 4.500h12M4 7.500h12M4 10.500h8" stroke="#222"/><path d="M16 9q5 4 1 9-3 2-6-1 5-1 5-8z" fill="#fff" stroke="#222"/></svg>
  </div>
</footer>
</body>
</html>
```
FILE: styles.css
```css
* { box-sizing: border-box; }
body {
  margin: 0; width: 1920px; height: 1080px; overflow: hidden;
  display: grid; grid-template-rows: 29px 935px 66px 50px;
  background: #1a1a1a; color: #fff;
  font-family: "Open Sans", "Noto Sans CJK KR", sans-serif;
}
svg { display: block; flex: none; }
button { border: 0; padding: 0; font-family: inherit; color: #fff; }
.defs { position: absolute; width: 0; height: 0; }
.ic { font-family: "Open Sans", sans-serif; text-anchor: middle; }
.b { font-weight: 700; }
.serif { font-family: "Liberation Serif", serif; }
.mono { font-family: "Liberation Mono", monospace; }

/* title bar */
.titlebar { background: #fff; color: #111; display: flex; align-items: center; position: relative; padding-left: 2px; }
.app-mark { width: 20px; height: 20px; }
.app-name { margin: 0 0 2px 5px; font: 15.5px/27px "Noto Sans", "Noto Sans CJK KR", sans-serif; letter-spacing: .05px; }
.banner { position: absolute; left: 764px; top: 0; height: 27px; width: 392px; display: flex; border-radius: 0 0 5px 5px; overflow: hidden; box-shadow: 0 1px 4px #0006; font-size: 15px; line-height: 26px; white-space: nowrap; }
.banner-text { width: 268px; background: #23d959; color: #314a38; text-align: center; font-weight: 500; letter-spacing: .9px; }
.banner-text b { letter-spacing: -.5px; }
.banner-opt { flex: 1; background: #1d1e20; color: #fff; display: flex; align-items: center; padding-left: 19px; gap: 24px; font-weight: 500; }
.win-buttons { margin: 0 26px 2px auto; }

/* meeting stage */
.stage { display: grid; grid-template-columns: 236px 1447px 237px; }
.side-left { display: flex; flex-direction: column; padding: 131px 0 0 10px; }
.status { display: flex; align-items: center; height: 30px; font-size: 16px; }
.shield { width: 30px; height: 30px; border-radius: 6px; background: #212121; display: grid; place-items: center; }
.rec-dot { margin: 0 8px 0 16px; }
.rec-text { margin-bottom: 3px; letter-spacing: -.2px; }
.pen { width: 50px; height: 50px; margin: 709px 0 0 5px; border-radius: 50%; background: #10161a; border: 1px solid #252b30; display: grid; place-items: center; }
.side-right { display: flex; flex-direction: column; align-items: flex-end; padding: 10px 10px 0 0; }
.view, .login { background: #212121; border-radius: 8px; height: 33px; font-size: 15.5px; display: flex; align-items: center; justify-content: center; gap: 5px; padding-bottom: 6px; }
.view { width: 64px; }
.login { width: 60px; margin-top: 88px; padding-bottom: 5px; letter-spacing: .5px; }

.thumbs { height: 121px; padding: 3px 0 3px 317px; display: flex; gap: 2px; }
.tile { width: 202px; height: 115px; background: #222; border: 1px solid #202020; display: flex; flex-direction: column; justify-content: space-between; align-items: flex-start; }
.tile.active { border-color: #8fc31f; }
.tile-name { width: 100%; text-align: center; font-weight: 700; font-size: 21px; line-height: 30px; margin-top: 40px; white-space: nowrap; letter-spacing: 1.6px; }
.tile-name.latin { letter-spacing: -.5px; }
.tile-label { background: #2a2a2a; height: 24px; line-height: 24px; padding: 0 5px; font-size: 16px; white-space: nowrap; letter-spacing: .25px; }
.tile-label.latin { letter-spacing: -.3px; }

/* shared desktop */
.share { height: 814px; display: flex; flex-direction: column; background: #0e0c10; color: #333; }
.tabstrip { height: 16px; background: #e6e6e8; border-bottom: 1px solid #d4d4d6; display: flex; align-items: center; padding-left: 4px; }
.tab { width: 113px; height: 16px; background: #efeff0; border-radius: 3px 3px 0 0; border: 1px solid #bbb; border-bottom: 0; display: flex; align-items: center; padding: 0 5px; }
.fav { width: 8px; height: 8px; background: #fbd60a; font: 700 6px/8px "Open Sans", sans-serif; text-align: center; }
.tab-title { flex: 1; margin-left: 4px; font-size: 6.3px; letter-spacing: -.15px; white-space: nowrap; }
.newtab { width: 13px; height: 13px; border-radius: 50%; background: #cdcdcf; margin-left: 4px; display: grid; place-items: center; }
.mini-win { margin: 0 7px 0 auto; }
.address-row { height: 16px; background: #efeff0; display: flex; align-items: center; padding-left: 4px; }
.omnibox { width: 1240px; height: 13px; border-radius: 7px; background: #c7c7c8; display: flex; align-items: center; margin-left: -1px; padding-left: 6px; }
.url { margin-left: 4px; font-size: 6.700px; line-height: 13px; letter-spacing: -.22px; color: #666; white-space: nowrap; }
.url b { font-weight: 400; color: #222; }
.omni-icons { margin: 0 4px 0 auto; }
.exts { margin-left: 5px; }
.bookmarks { height: 17px; background: #ececed; border-bottom: 1px solid #bcbcbe; display: flex; align-items: center; padding-left: 7px; font-size: 6.200px; letter-spacing: -.2px; line-height: 12px; color: #333; white-space: nowrap; }
.bookmarks span { display: flex; align-items: center; gap: 3px; flex: none; }
.bookmarks svg { width: 8px; height: 8px; }
.canvas { flex: 1; position: relative; padding: 191px 0 0 371px; }
.cursor { position: absolute; left: 1118px; top: 244px; }
.dt { font-family: "Liberation Sans", Arial, sans-serif; font-size: 11.800px; text-anchor: middle; fill: #222; }
.dh { font-family: "Liberation Sans", Arial, sans-serif; font-size: 14.300px; text-anchor: end; fill: #222; }

.mini-bar { height: 23px; background: linear-gradient(90deg, #242226, #242026 50%, #232127); border-top: 1px solid #39363b; display: flex; align-items: center; color: #ddd; font-size: 6px; padding-left: 9px; }
.weather { display: flex; align-items: center; gap: 3px; width: 366px; line-height: 7px; white-space: nowrap; }
.mini-search { width: 104px; height: 15px; margin-left: 6px; border-radius: 8px; background: #434046; border: 1px solid #555258; display: flex; align-items: center; padding: 0 2px 0 5px; }
.mini-search span { flex: 1; margin-left: 4px; font-size: 7px; }
.mini-apps { display: flex; margin-left: 1px; }
.mini-apps i { width: 20.700px; height: 22px; display: grid; place-items: center; position: relative; font-style: normal; }
.mini-apps svg { width: 12px; height: 12px; }
.mini-apps .on { background: #2f2c31; }
.mini-apps .on::after, .mini-apps .dot::after { content: ""; position: absolute; bottom: 1px; width: 3px; height: 1.500px; background: #999; }
.mini-apps .on::after { width: 7px; background: #d58a96; }
.mini-tray { display: flex; margin-left: auto; }
.mini-tray i { width: 15.100px; height: 22px; display: grid; place-items: center; font-style: normal; font-size: 9px; }
.mini-tray svg { width: 8px; height: 8px; }
.mini-tray .glyph.ko { width: 20px; font-size: 7px; }
.mini-tray .net, .mini-tray .net svg { width: 22px; }
.mini-clock { width: 34px; text-align: right; line-height: 7.500px; font-size: 6.200px; white-space: nowrap; }
.mini-badge { width: 8px; height: 8px; margin: 0 9px 0 3px; border-radius: 50%; background: #e59aae; color: #333; text-align: center; line-height: 8px; }

/* meeting controls */
.controls { display: flex; align-items: flex-start; padding-top: 7px; color: #b0b0b0; }
.ctl { width: 60px; display: flex; flex-direction: column; align-items: center; font-size: 15.500px; position: relative; }
.ctl > svg, .icon-row { height: 30px; }
.ctl > span { line-height: 22px; margin-top: 2px; white-space: nowrap; letter-spacing: .4px; }
.icon-row { display: flex; align-items: center; gap: 6px; padding-left: 26px; width: 100%; }
.icon-row em { font-style: normal; font-size: 16px; line-height: 20px; margin-top: -4px; }
.caret { width: 10px; height: 6px; margin-top: 12px; }
.c-mic { margin-left: 28px; } .k1 { margin-left: 4px; }
.c-video { width: 80px; margin-left: 32px; } .k2 { margin-left: 1px; }
.c-people { width: 86px; margin-left: 478px; } .k3 { margin-left: 18px; }
.c-chat { margin-left: 37px; } .k4 { margin-left: 6px; }
.c-share { width: 80px; margin-left: 32px; color: #23d959; }
.c-rec { margin-left: 42px; } .c-react { margin-left: 41px; } .c-apps { margin-left: 39px; }
.leave { width: 77px; height: 34px; margin: 9px 15px 0 auto; border-radius: 8px; background: #b82525; font-size: 15px; font-weight: 700; padding: 0 2px 3px 0; letter-spacing: .3px; }

/* host taskbar */
.taskbar { display: flex; align-items: center; background: linear-gradient(90deg, #1c1c1d 0, #1b2023 420px, #1e242e 700px, #1f2632 900px, #3e3f41 960px, #454545 1100px, #464646 1690px, #23262c 1775px, #1c1c1c 1860px); }
.start { width: 60px; display: grid; place-items: center; }
.search { width: 360px; height: 50px; background: #323232; border: 1px solid #5c5c5c; display: flex; align-items: center; padding-left: 14px; }
.search span { margin: 0 0 5px 15px; font-size: 19px; color: #d8d8d8; }
.art { margin: 0 -1px 0 auto; }
.taskview { margin-left: 20px; }
.grip { width: 4px; height: 26px; margin-left: 26px; border: solid #56595c; border-width: 0 1px; }
.apps { display: flex; margin-left: 13px; }
.apps i { width: 62px; height: 50px; display: grid; place-items: center; position: relative; padding-right: 1px; }
.apps .run::after { content: ""; position: absolute; bottom: 0; left: 6px; width: 51px; height: 3px; background: #e667b0; }
.apps .stacked::after { background: linear-gradient(90deg, #e667b0 40px, #b35a92 40px); }
.apps .current { background: linear-gradient(90deg, transparent 1px, #6b6b6b 1px); }
.apps .current::after { left: 1px; width: 61px; }
.tray { display: flex; align-items: center; flex: 1; height: 50px; margin-left: 146px; margin-right: 5px; border-right: 1px solid #888; }
.t-up { margin-left: 11px; } .t-mic { margin-left: 15px; } .t-sync { margin-left: 14px; }
.t-bat { margin-left: 10px; } .t-pen { margin-left: 15px; } .t-kbd { margin-left: 15px; }
.t-a { width: 18px; margin-left: 9px; font-size: 24px; line-height: 48px; text-align: center; }
.t-ko { width: 19px; height: 19px; margin-left: 18px; background: #fff; color: #111; font-size: 16px; line-height: 18px; text-align: center; font-weight: 500; }
.clock { width: 84px; margin-left: 18px; text-align: center; font-size: 15px; line-height: 23px; letter-spacing: -.15px; white-space: nowrap; }
.t-note { margin-left: 19px; }
```
